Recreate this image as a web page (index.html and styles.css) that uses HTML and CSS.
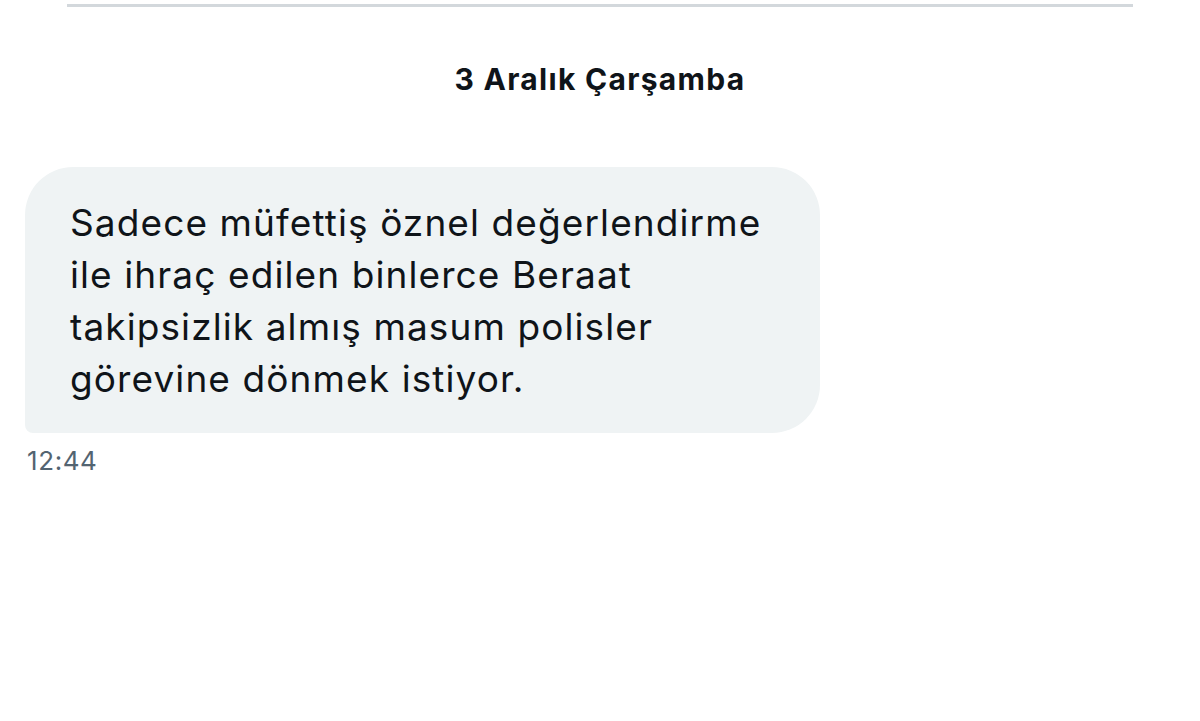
FILE: index.html
```html
<!DOCTYPE html>
<html lang="tr">
<head>
<meta charset="utf-8">
<link rel="stylesheet" href="styles.css">
</head>
<body>
<div class="top-rule"></div>
<div class="day">3 Aralık Çarşamba</div>
<div class="msg">
  <div class="bubble">Sadece müfettiş öznel değerlendirme<br>ile ihraç edilen binlerce Beraat<br>takipsizlik almış masum polisler<br>görevine dönmek istiyor.</div>
  <div class="time">12:44</div>
</div>
</body>
</html>
```
FILE: styles.css
```css
html, body {
  margin: 0;
  padding: 0;
  background: #ffffff;
  font-family: Inter, "Noto Sans", sans-serif;
}
.top-rule {
  margin: 4px 67px 0 67px;
  height: 3px;
  background: #d3d8dc;
}
.day {
  margin-top: 54px;
  text-align: center;
  font-size: 30px;
  line-height: 36px;
  font-weight: 700;
  letter-spacing: 1.3px;
  color: #0f1419;
}
.msg {
  margin-top: 70px;
  margin-left: 25px;
}
.bubble {
  width: 750px;
  padding: 30px 0 28px 45px;
  background: #eff3f4;
  border-radius: 48px 48px 48px 8px;
  font-size: 37px;
  line-height: 52px;
  letter-spacing: 1.1px;
  color: #0f1419;
}
.time {
  margin-top: 13px;
  margin-left: 2px;
  font-size: 26px;
  line-height: 30px;
  letter-spacing: 0.6px;
  color: #536471;
}
```
